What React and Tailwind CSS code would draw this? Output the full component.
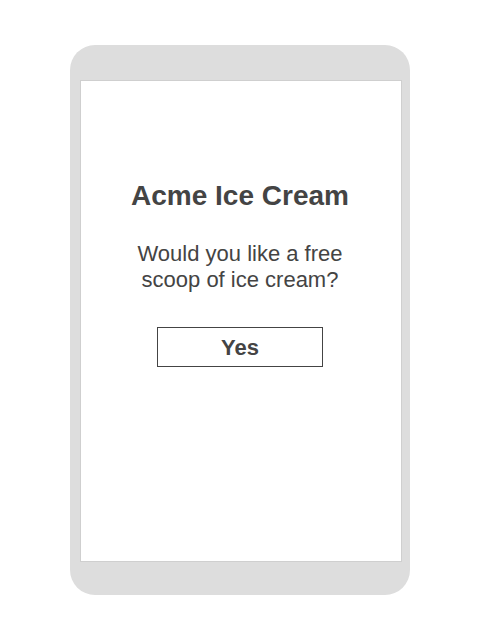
import React from 'react'

const App = () => {
  return (
    <div className="bg-white w-[480px] h-[640px] pt-[45px] pl-[70px]" style={{ fontFamily: '"Liberation Sans", Arial, sans-serif' }}>
      <div className="w-[340px] h-[550px] rounded-[25px] bg-[#dddddd] pt-[35px] pl-[10px]">
        <div className="w-[322px] h-[482px] bg-white border border-[#cfcfcf] flex flex-col items-center pt-[99px] pr-[2px] text-[#444444]">
          <h1 className="text-[28px] leading-[32px] font-bold">Acme Ice Cream</h1>
          <p className="mt-[29px] text-[22px] leading-[26px] text-center w-[240px]">
            Would you like a free scoop of ice cream?
          </p>
          <button className="mt-[34px] w-[166px] h-[40px] border border-[#444444] bg-white text-[22px] font-bold text-[#444444]">
            Yes
          </button>
        </div>
      </div>
    </div>
  )
}

export default App
